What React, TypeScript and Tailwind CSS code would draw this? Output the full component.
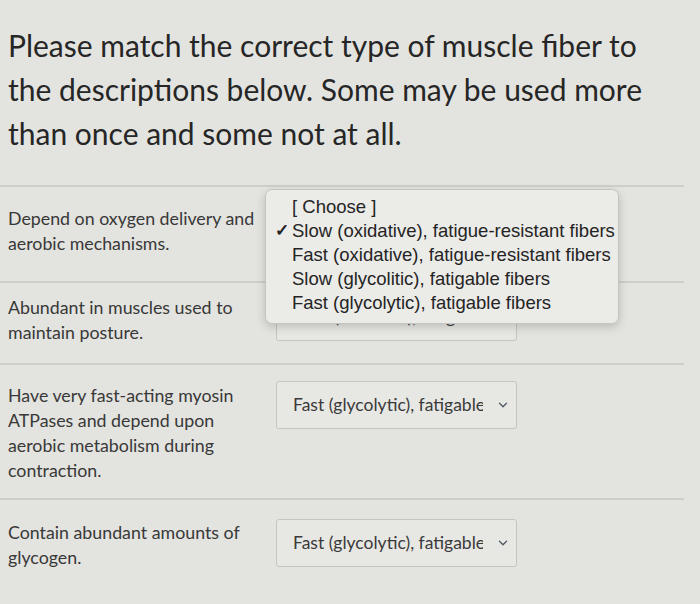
import { ChevronDown } from 'lucide-react';

const lato = { fontFamily: 'Lato, "Open Sans", sans-serif' };

function Select({ value }: { value: string }) {
  return (
    <div className="relative flex h-[48px] w-[241px] items-center overflow-hidden rounded-[3px] border border-[#c6c6c1] bg-[#e7e7e3] pl-[16px] pr-[33px]">
      <span className="whitespace-nowrap overflow-hidden text-[17.5px] text-[#3a3a3a] font-['Lato',sans-serif]">{value}</span>
      <ChevronDown size={14} strokeWidth={2.2} className="absolute right-[6px] top-[16px] text-[#4d5863]" />
    </div>
  );
}

function Row({
  label,
  value,
  h,
  labelTop,
  selectTop,
  children,
}: {
  label: string;
  value: string;
  h: string;
  labelTop: string;
  selectTop: string;
  children?: React.ReactNode;
}) {
  return (
    <div className={`relative flex border-t-2 border-[#cfcfca] pl-[8px] ${h}`}>
      <p className={`w-[268px] pr-[14px] text-[17.8px] leading-[25px] text-[#383838] font-['Lato',sans-serif] ${labelTop}`}>
        {label}
      </p>
      <div className={selectTop}>
        <Select value={value} />
      </div>
      {children}
    </div>
  );
}

function ChoiceMenu() {
  const items = [
    { t: '[ Choose ]', on: false },
    { t: 'Slow (oxidative), fatigue-resistant fibers', on: true },
    { t: 'Fast (oxidative), fatigue-resistant fibers', on: false },
    { t: 'Slow (glycolitic), fatigable fibers', on: false },
    { t: 'Fast (glycolytic), fatigable fibers', on: false },
  ];
  return (
    <div className="absolute left-[265px] top-[2px] z-10 w-[354px] rounded-[7px] border border-[#c4c4c0] bg-[#ebebe8] pt-[5px] pb-[8px] shadow-[0_3px_10px_rgba(0,0,0,0.18)]">
      {items.map((it) => (
        <div key={it.t} className="flex h-[24px] items-center text-[18.5px] text-[#242424] font-['Liberation_Sans',Arial,sans-serif]">
          <span className="w-[26px] pl-[9px] text-[17px] font-bold">{it.on ? '✓' : ''}</span>
          <span className="whitespace-nowrap">{it.t}</span>
        </div>
      ))}
    </div>
  );
}

export default function App() {
  return (
    <div className="min-h-[604px] w-[700px] overflow-hidden bg-[#e3e3df]" style={lato}>
      <h1 className="w-[665px] pl-[8px] pt-[23px] text-[30px] leading-[44px] text-[#262626] font-normal font-['Lato',sans-serif]">
        Please match the correct type of muscle fiber to the descriptions below. Some may be used more than once and some not at all.
      </h1>

      <div className="mt-[30px] w-[684px]">
        <Row
          label="Depend on oxygen delivery and aerobic mechanisms."
          value="Slow (oxidative), fatigue-resistant fibers"
          h="h-[96px]"
          labelTop="pt-[19px]"
          selectTop="pt-[12px]"
        >
          <ChoiceMenu />
        </Row>
        <Row
          label="Abundant in muscles used to maintain posture."
          value="Slow (oxidative), fatigue-resistant fibers"
          h="h-[82px]"
          labelTop="pt-[12px]"
          selectTop="pt-[10px]"
        />
        <Row
          label="Have very fast-acting myosin ATPases and depend upon aerobic metabolism during contraction."
          value="Fast (glycolytic), fatigable fibers"
          h="h-[135px]"
          labelTop="pt-[18px]"
          selectTop="pt-[16px]"
        />
        <Row
          label="Contain abundant amounts of glycogen."
          value="Fast (glycolytic), fatigable fibers"
          h="h-[110px]"
          labelTop="pt-[20px]"
          selectTop="pt-[19px]"
        />
      </div>
    </div>
  );
}
